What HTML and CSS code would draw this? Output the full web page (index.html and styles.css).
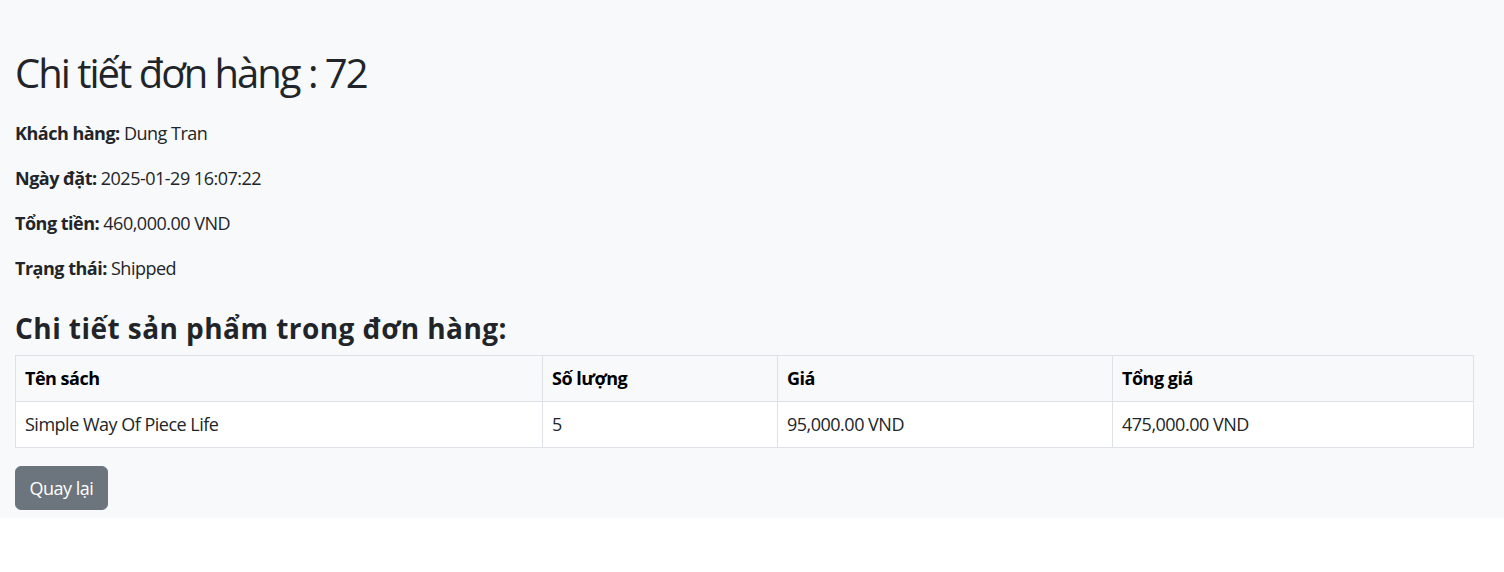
FILE: index.html
```html
<!DOCTYPE html>
<html lang="vi">
<head>
<meta charset="utf-8">
<title>Chi tiết đơn hàng</title>
<link rel="stylesheet" href="styles.css">
</head>
<body>
<div class="page">
  <h1 class="title">Chi tiết đơn hàng : 72</h1>
  <p class="field"><strong>Khách hàng:</strong> Dung Tran</p>
  <p class="field"><strong>Ngày đặt:</strong> 2025-01-29 16:07:22</p>
  <p class="field"><strong>Tổng tiền:</strong> 460,000.00 VND</p>
  <p class="field"><strong>Trạng thái:</strong> Shipped</p>
  <h3 class="subtitle">Chi tiết sản phẩm trong đơn hàng:</h3>
  <table class="items">
    <colgroup>
      <col class="c1"><col class="c2"><col class="c3"><col class="c4">
    </colgroup>
    <thead>
      <tr><th>Tên sách</th><th>Số lượng</th><th>Giá</th><th>Tổng giá</th></tr>
    </thead>
    <tbody>
      <tr><td>Simple Way Of Piece Life</td><td>5</td><td>95,000.00 VND</td><td>475,000.00 VND</td></tr>
    </tbody>
  </table>
  <a class="btn-back" href="#">Quay lại</a>
</div>
</body>
</html>
```

FILE: styles.css
```css
* { box-sizing: border-box; }
html, body { margin: 0; padding: 0; background: #fff; }
body {
  font-family: "Open Sans", "Noto Sans", sans-serif;
  font-size: 18px;
  line-height: 27px;
  letter-spacing: -0.5px;
  color: #212529;
}
.page {
  background: #f8f9fa;
  padding: 49px 31px 8px 15px;
  display: flow-root;
}
.title {
  margin: 0 0 23px;
  font-size: 40px;
  line-height: 48px;
  font-weight: 400;
  letter-spacing: -2px;
}
.field {
  margin: 0 0 18px;
}
.field strong { font-weight: 700; }
.subtitle {
  margin: 29px 0 10px;
  font-size: 28px;
  line-height: 34px;
  font-weight: 700;
  letter-spacing: 0.45px;
}
.items {
  width: 1458px;
  border-collapse: collapse;
  margin-bottom: 18px;
  table-layout: fixed;
}
.c1 { width: 527px; }
.c2 { width: 235px; }
.c3 { width: 335px; }
.c4 { width: 361px; }
.items th, .items td {
  border: 1px solid #dee2e6;
  padding: 9px;
  text-align: left;
  vertical-align: top;
}
.items th {
  font-weight: 700;
  color: #000;
  background: #f8f9fa;
}
.items td { background: #fff; color: #212529; }
.btn-back {
  display: inline-block;
  background: #6c757d;
  border: 1px solid #6c757d;
  color: #fff;
  text-decoration: none;
  padding: 7.5px 13.5px;
  border-radius: 6px;
  font-size: 18px;
  line-height: 27px;
}
```
